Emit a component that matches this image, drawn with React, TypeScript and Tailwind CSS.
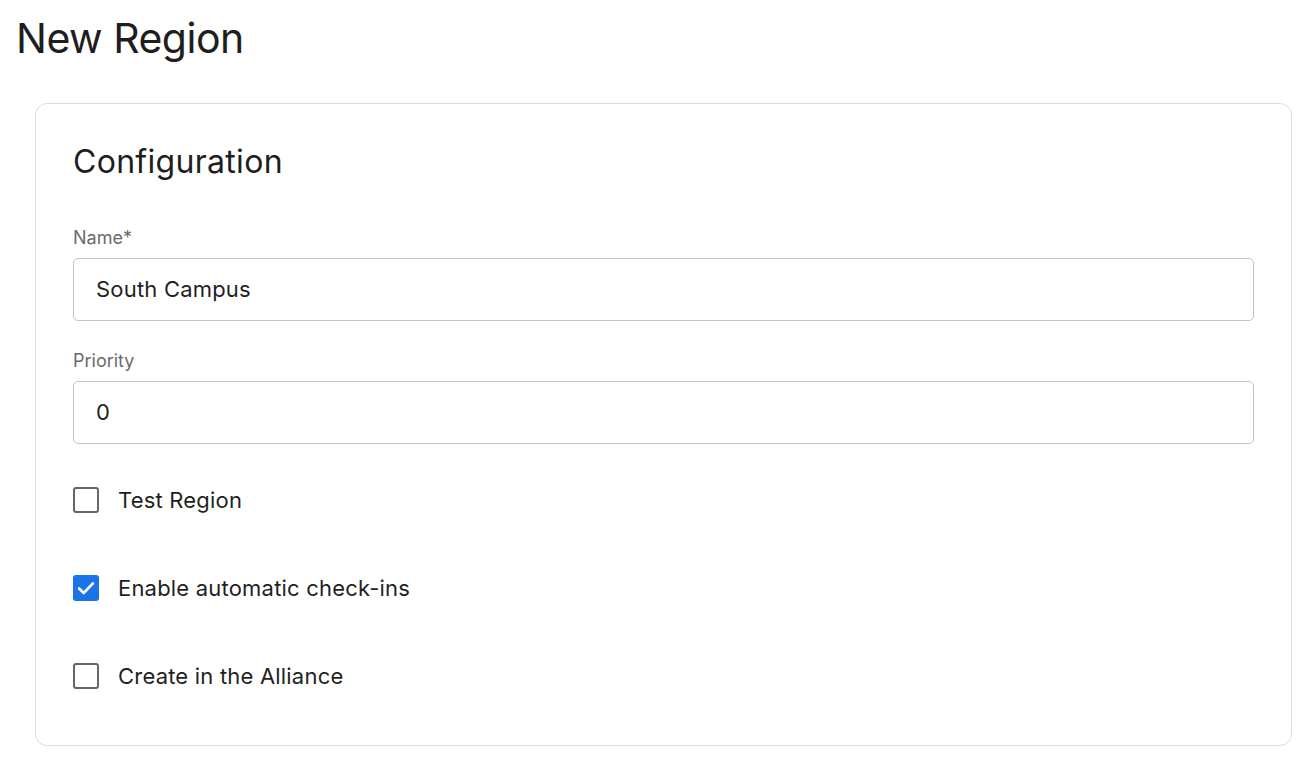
import React from 'react';

const Field: React.FC<{ label: string; value: string }> = ({ label, value }) => (
  <div className="flex flex-col">
    <label className="text-[18px] leading-[24px] text-[#6b6b6b] mb-[8px]">{label}</label>
    <div className="h-[63px] rounded-[5px] border border-[#c4c4c4] flex items-center px-[22px] text-[22px] text-[#1f1f1f] tracking-[0.2px]">
      {value}
    </div>
  </div>
);

const Check: React.FC<{ label: string; checked?: boolean }> = ({ label, checked }) => (
  <div className="flex items-center h-[26px] gap-[19px]">
    {checked ? (
      <div className="w-[26px] h-[26px] rounded-[3px] bg-[#1a73e8] flex items-center justify-center">
        <svg width="22" height="22" viewBox="0 0 24 24" fill="none">
          <path d="M4.5 12.5l5 5L19.5 7" stroke="white" strokeWidth="3" strokeLinecap="round" strokeLinejoin="round" />
        </svg>
      </div>
    ) : (
      <div className="w-[26px] h-[26px] rounded-[3px] border-[2.5px] border-[#666]" />
    )}
    <span className="text-[22px] text-[#1f1f1f] tracking-[0.2px]">{label}</span>
  </div>
);

export default function App() {
  return (
    <div className="min-h-screen bg-white font-['Inter',sans-serif] pl-4 pr-[15px]">
      <h1 className="text-[41px] leading-[48px] pt-[14px] text-[#1e1e1e] tracking-[-0.5px]">New Region</h1>
      <div className="ml-[19px] mt-[41px] rounded-[12px] border border-[#dcdcdc] px-[37px] pt-[38px] pb-[56px]">
        <h2 className="text-[32px] leading-[40px] text-[#1e1e1e] tracking-[0.3px]">Configuration</h2>
        <div className="mt-[44px] flex flex-col gap-[28px]">
          <Field label="Name*" value="South Campus" />
          <Field label="Priority" value="0" />
        </div>
        <div className="mt-[43px] flex flex-col gap-[62px]">
          <Check label="Test Region" />
          <Check label="Enable automatic check-ins" checked />
          <Check label="Create in the Alliance" />
        </div>
      </div>
    </div>
  );
}
